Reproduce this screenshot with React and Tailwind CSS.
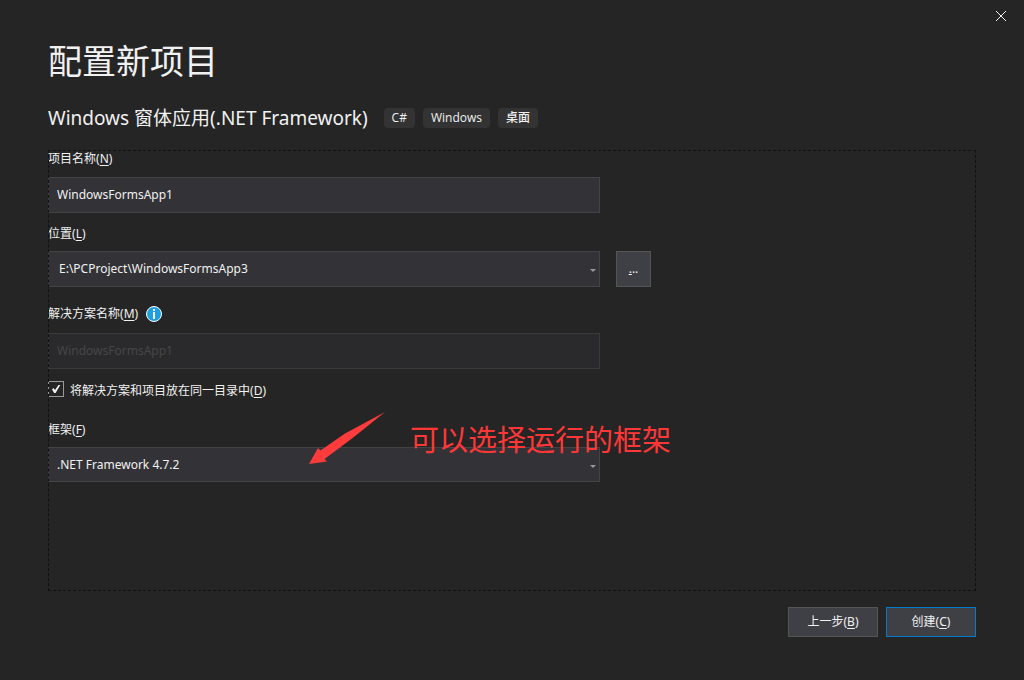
function Key({ children }) {
  return (
    <span>
      (<u className="underline underline-offset-2">{children}</u>)
    </span>
  );
}

function Caret() {
  return (
    <svg aria-hidden="true" viewBox="0 0 6 3" className="h-[3px] w-[6px] fill-[#999999] pointer-events-none absolute top-1/2 right-1">
      <path d="M0 0h6L3 3z" />
    </svg>
  );
}

function Tag({ children }) {
  return <li className="flex h-5 items-center rounded bg-[#333333] px-2 font-['Open_Sans','Noto_Sans_CJK_SC',sans-serif] text-xs font-medium">{children}</li>;
}

const field = "block w-full appearance-none rounded-none border border-[#434346] bg-[#333337] px-2 text-xs text-[#f1f1f1] outline-none";

export default function App() {
  return (
    <main className="flex min-h-screen flex-col bg-[#252526] px-12 pb-[43px] font-['Noto_Sans','Noto_Sans_CJK_SC',sans-serif] text-xs text-[#f1f1f1]">
      <div className="-mr-[34px] flex h-8 justify-end">
        <button type="button" aria-label="关闭" className="flex w-[18px] items-center justify-center">
          <svg aria-hidden="true" viewBox="0 0 10 10" className="size-[10px] fill-none stroke-[#f1f1f1]">
            <path d="M0 0l10 10M10 0L0 10" />
          </svg>
        </button>
      </div>

      <h1 className="mt-[7px] text-[34px] leading-[44px]">配置新项目</h1>
      <div className="mt-[21px] flex h-7 items-center gap-4">
        <h2 className="text-[19px] leading-7 whitespace-nowrap">Windows 窗体应用(.NET Framework)</h2>
        <ul className="flex gap-2">
          <Tag>C#</Tag>
          <Tag>Windows</Tag>
          <Tag>桌面</Tag>
        </ul>
      </div>

      <form className="relative mt-[18px] flex grow flex-col">
        <label htmlFor="project" className="leading-[18px]">项目名称<Key>N</Key></label>
        <div className="mt-[9px] w-[552px]">
          <input id="project" type="text" defaultValue="WindowsFormsApp1" className={`${field} h-9 pb-[2px]`} />
        </div>

        <label htmlFor="location" className="mt-3 leading-[18px]">位置<Key>L</Key></label>
        <div className="mt-2 flex gap-4">
          <div className="relative w-[552px]">
            <select id="location" className={`${field} h-9 pl-[10px]`}>
              <option>E:\PCProject\WindowsFormsApp3</option>
            </select>
            <Caret />
          </div>
          <button type="button" aria-label="浏览" className="h-9 w-[35px] border border-[#555555] bg-[#3f3f46]">
            <u>.</u>..
          </button>
        </div>

        <div className="mt-[18px] flex items-center gap-2">
          <label htmlFor="solution" className="leading-[18px]">解决方案名称<Key>M</Key></label>
          <svg role="img" aria-label="信息" viewBox="0 0 16 16" className="size-4">
            <circle cx="8" cy="8" r="7.5" fill="#1ba1e2" stroke="#ffffff" />
            <path d="M7 3h2v2H7zM7 6h2v7H7z" fill="#ffffff" />
          </svg>
        </div>
        <div className="mt-[10px] w-[552px]">
          <input id="solution" type="text" disabled defaultValue="WindowsFormsApp1" className="block h-9 w-full border border-[#3a3a3d] bg-[#2a2a2c] px-2 pb-[2px] text-xs text-[#464646]" />
        </div>

        <div className="mt-3 flex items-start gap-[6px]">
          <span className="relative flex size-4">
            <input id="same" type="checkbox" defaultChecked className="peer size-4 appearance-none border border-[#999999] bg-[#252526]" />
            <svg aria-hidden="true" viewBox="0 0 16 16" className="pointer-events-none absolute inset-0 hidden size-4 fill-[#f1f1f1] peer-checked:block">
              <path d="M4 8.5l1.5-1.5 1.5 2 3.5-5h1.8L7.6 12H6.2z" />
            </svg>
          </span>
          <label htmlFor="same" className="leading-5">将解决方案和项目放在同一目录中<Key>D</Key></label>
        </div>

        <label htmlFor="framework" className="mt-5 leading-[18px]">框架<Key>F</Key></label>
        <div className="relative mt-2 w-[552px]">
          <select id="framework" className={`${field} h-[35px]`}>
            <option>.NET Framework 4.7.2</option>
          </select>
          <Caret />
          <svg aria-hidden="true" viewBox="0 0 80 55" className="pointer-events-none absolute -top-9 left-[259px] h-[55px] w-20 fill-[#ff3b3b]">
            <path d="M78 1L45 27.5L17.5 48L20 50.5L2 53L11 37L13.5 39.5L38 22.5Z" />
          </svg>
          <p className="pointer-events-none absolute -top-[27px] left-[362px] text-[29px] leading-10 whitespace-nowrap text-[#ff3737]">可以选择运行的框架</p>
        </div>
        <div aria-hidden="true" className="pointer-events-none absolute inset-0 border border-dashed border-[#111111]" />
      </form>

      <div className="mt-4 flex justify-end gap-2">
        <button type="button" className="h-[30px] w-[90px] border border-[#555555] bg-[#3f3f46]">上一步<Key>B</Key></button>
        <button type="submit" className="h-[30px] w-[90px] border border-[#007acc] bg-[#3f3f46]">创建<Key>C</Key></button>
      </div>
    </main>
  );
}
